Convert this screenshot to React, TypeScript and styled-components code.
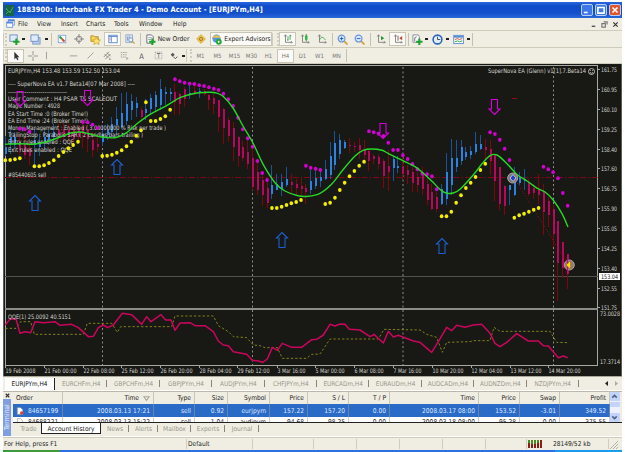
import React from 'react'
import styled, { createGlobalStyle } from 'styled-components'

const GlobalStyle = createGlobalStyle`
  * {
    box-sizing: border-box;
  }
  body {
    margin: 0;
    background: #fff;
    overflow: hidden;
  }
`

const face = '#f0eee3'
const line = '#cfccbc'
const ui = "'DejaVu Sans Condensed', 'DejaVu Sans', sans-serif"

const Screen = styled.div`
  width: 625px;
  height: 452px;
  padding: 2px 3px 0 3px;
  display: flex;
  flex-direction: column;
  background: #fff;
  color: #222;
  font-family: ${ui};
  font-stretch: condensed;
  font-size: 6.6px;
  line-height: 8px;
  white-space: nowrap;
  overflow: hidden;
`

const TitleBar = styled.header`
  display: flex;
  align-items: center;
  flex: 0 0 16px;
  padding: 0 1px 0 2px;
  gap: 2px;
  background: linear-gradient(#2a68dc, #0e4bc8 25%, #1350cc 70%, #2a68d8);
  color: #fff;
`

const Title = styled.span`
  flex: 1;
  margin-left: 1px;
  font-family: 'DejaVu Sans', sans-serif;
  font-stretch: condensed;
  font-weight: bold;
  font-size: 7.4px;
  letter-spacing: 0.08px;
`

const WindowButton = styled.div<{ $close?: boolean }>`
  width: 12px;
  height: 12px;
  border: 1px solid #b8cff5;
  border-radius: 2px;
  background: ${(p) => (p.$close ? '#e2542c' : '#3d78e4')};
  svg {
    display: block;
  }
`

const MenuBar = styled.nav`
  display: flex;
  align-items: center;
  flex: 0 0 13px;
  padding: 0 3px;
  background: ${face};
  border-bottom: 1px solid ${line};
`

const MenuItem = styled.span<{ $w: number }>`
  width: ${(p) => p.$w}px;
`

const MdiButtons = styled.div`
  display: flex;
  margin-left: auto;
  gap: 4px;
`

const ToolBar = styled.div<{ $h: number }>`
  display: flex;
  align-items: center;
  flex: 0 0 ${(p) => p.$h}px;
  background: ${face};
  border-bottom: 1px solid ${line};
`

const Grip = styled.div<{ $w: number }>`
  flex: 0 0 ${(p) => p.$w}px;
  height: 13px;
  border-left: 1px solid ${line};
  border-right: 2px dotted #d0cdbd;
`

const Divider = styled.div<{ $w: number }>`
  flex: 0 0 ${(p) => p.$w}px;
  height: 13px;
  background: linear-gradient(#c4c1b2, #c4c1b2) center / 1px 100% no-repeat;
`

const Tool = styled.div<{ $w?: number; $on?: boolean }>`
  display: flex;
  align-items: center;
  justify-content: center;
  gap: 2px;
  flex: 0 0 ${(p) => p.$w || 17}px;
  height: 14px;
  font-size: ${(p) => (p.$w && p.$w > 20 ? 6.6 : 6)}px;
  border: 1px solid ${(p) => (p.$on ? '#c9c6b8' : 'transparent')};
  background: ${(p) => (p.$on ? '#fbfaf6' : 'transparent')};
  svg {
    flex: none;
  }
`

const Period = styled(Tool)`
  color: #777;
`

const Caret = styled.div`
  flex: 0 0 5px;
  height: 2px;
  background: linear-gradient(#222, #222) center / 3px 2px no-repeat;
`

const ChartWindow = styled.main`
  flex: 0 0 312px;
  height: 312px;
  background: #181814;
  svg {
    display: block;
  }
`

const ChartTabs = styled.div`
  display: flex;
  align-items: center;
  flex: 0 0 14px;
  padding-left: 2px;
  background: ${face};
  color: #99968a;
  border-top: 1px solid #aaa79b;
`

const ChartTab = styled.span<{ $active?: boolean }>`
  flex: 0 0 ${(p) => (p.$active ? 50 : 52.4)}px;
  height: 12px;
  line-height: 12px;
  text-align: center;
  font-size: 6.4px;
  color: ${(p) => (p.$active ? '#111' : 'inherit')};
  background: ${(p) =>
    p.$active
      ? '#fff'
      : 'linear-gradient(#888578, #888578) right center / 1px 7px no-repeat'};
  border-right: ${(p) => (p.$active ? '1px solid #222' : '0')};
`

const TabArrows = styled.div`
  display: flex;
  gap: 7px;
  margin-left: auto;
  padding-right: 3px;
`

const Terminal = styled.section`
  display: flex;
  flex: 0 0 45px;
  margin-top: 1px;
  background: ${face};
  border-top: 1px solid #bbb8aa;
`

const Side = styled.div`
  flex: 0 0 8px;
  display: flex;
  flex-direction: column;
  align-items: center;
`

const SideTitle = styled.div`
  flex: 1;
  width: 8px;
  writing-mode: vertical-rl;
  transform: rotate(180deg);
  line-height: 8px;
  text-align: center;
  font-size: 6.8px;
  background: #7f9fe0;
  color: #e6eeff;
`

const TerminalBody = styled.div`
  flex: 1;
  min-width: 0;
  padding-left: 2px;
`

const TableArea = styled.div`
  display: flex;
  height: 31px;
  overflow: hidden;
  border-bottom: 1px solid #222;
`

const Table = styled.div`
  flex: 0 0 597px;
`

const Row = styled.div<{ $kind: 'head' | 'selected' | 'plain' }>`
  display: flex;
  height: ${(p) => (p.$kind === 'selected' ? 13 : 12)}px;
  line-height: ${(p) => (p.$kind === 'plain' ? 10 : 12)}px;
  align-items: ${(p) => (p.$kind === 'plain' ? 'flex-start' : 'stretch')};
  background: ${(p) =>
    p.$kind === 'head' ? face : p.$kind === 'selected' ? '#2b6bc8' : '#fff'};
  color: ${(p) => (p.$kind === 'selected' ? '#dce8ff' : '#222')};
`

const Cell = styled.span<{ $w: number; $left?: boolean }>`
  flex: 0 0 ${(p) => p.$w}px;
  display: flex;
  align-items: center;
  gap: 4px;
  justify-content: ${(p) => (p.$left ? 'flex-start' : 'flex-end')};
  padding: 0 3px;
  border-right: 1px solid rgba(160, 160, 140, 0.5);
`

const Scroll = styled.div`
  flex: 0 0 10px;
  display: flex;
  flex-direction: column;
  justify-content: space-between;
  background: #eef1fb;
`

const ScrollButton = styled.div`
  height: 9px;
  background: #c4d3fa;
  border-radius: 1px;
`

const Thumb = styled(ScrollButton)`
  height: 5px;
  margin-bottom: 5px;
`

const TerminalTabs = styled.div`
  display: flex;
  height: 12px;
  padding-left: 3px;
  line-height: 12px;
  color: #99968a;
`

const TerminalTab = styled.span<{ $w: number; $active?: boolean; $bar?: boolean }>`
  flex: 0 0 ${(p) => p.$w}px;
  text-align: center;
  height: 11px;
  color: ${(p) => (p.$active ? '#111' : 'inherit')};
  background: ${(p) =>
    p.$active
      ? '#fff'
      : p.$bar
        ? 'linear-gradient(#888578, #888578) right center / 1px 7px no-repeat'
        : 'none'};
  border: ${(p) => (p.$active ? '1px solid #222' : '0')};
  border-top: 0;
`

const StatusBar = styled.footer`
  display: flex;
  align-items: center;
  flex: 0 0 13px;
  margin-top: 1px;
  background: ${face};
  border-top: 1px solid ${line};
`

const StatusCell = styled.span<{ $w: number }>`
  display: flex;
  align-items: center;
  gap: 11px;
  flex: 0 0 ${(p) => p.$w}px;
  height: 10px;
  padding-left: 1px;
  border-right: 1px solid ${line};
`

const TaskBar = styled.div`
  flex: 0 0 2px;
  background: linear-gradient(
    90deg,
    #3f9a38 57px,
    #2c6fe4 57px,
    #2c6fe4 552px,
    #1c9ced 552px
  );
`

type IconName =
  | 'newChart' | 'profiles' | 'market' | 'target' | 'folder' | 'navigator'
  | 'tester' | 'order' | 'warn' | 'expert' | 'bars' | 'candles' | 'lineChart'
  | 'zoomIn' | 'zoomOut' | 'scroll' | 'shift' | 'indicator' | 'clock'
  | 'template' | 'cursor' | 'cross' | 'vline' | 'hline' | 'trend' | 'channel'
  | 'fibo' | 'text' | 'label' | 'arrows' | 'mdi' | 'doc'

const axes = <path d="M3 1v9h8M1.500 3L3 1l1.500 2M9.500 8.500L11 10l-1.500 1.500" stroke="#777" fill="none" />
const plus = <path d="M8 5v7M4.500 8.500h7" stroke="#1aa32a" strokeWidth="2.200" />
const lens = (
  <>
    <path d="M7.500 7.500l4 4" stroke="#d5a33a" strokeWidth="2" />
    <circle cx="5" cy="5" r="3.700" fill="#d8e9ff" stroke="#6b93d8" strokeWidth="1.300" />
  </>
)

const glyphs: Record<IconName, React.ReactNode> = {
  newChart: <><rect x="1" y="1" width="8" height="7" fill="#dfeafc" stroke="#6d8fc5" />{plus}</>,
  profiles: <><rect x="3" y="4" width="8" height="7" fill="#bcd0f0" stroke="#7c98c8" /><rect x="1" y="1" width="8" height="7" fill="#dfeafc" stroke="#6d8fc5" /></>,
  market: <><rect x="1.500" y="1.500" width="9" height="9" fill="#fff" stroke="#7ba0d8" /><path d="M3 3l3 3" stroke="#2a9c3a" strokeWidth="2.400" /><path d="M6 6l3 3" stroke="#e0452e" strokeWidth="2.400" /></>,
  target: <><circle cx="6" cy="6" r="3.400" fill="none" stroke="#777" /><path d="M6 0v5M6 7v5M0 6h5M7 6h5" stroke="#777" /></>,
  folder: <><path d="M1 2h3l1 1h4v5H1z" fill="#f8d65a" stroke="#b58a22" /><path d="M7 4l1.500 2.300 3 .3-2.200 2 .6 2.900L7 10l-2.800 1.500.6-2.900-2.200-2 3-.3z" fill="#ffe36c" stroke="#c69620" strokeWidth=".7" /></>,
  navigator: <><rect x="1" y="1.500" width="10" height="9" fill="#fff" stroke="#4b7fd0" /><path d="M1 3h10M4 3v7" stroke="#4b7fd0" /><path d="M2 5h1M2 7h1" stroke="#d33" /></>,
  tester: <><rect x="1" y="1" width="8" height="9" fill="#dce6f7" stroke="#8aa4d0" /><path d="M3 3v5M5 2v4" stroke="#8a93a8" /><path d="M8.500 8.500l3 3" stroke="#d5a33a" strokeWidth="1.500" /><circle cx="7" cy="7" r="2.500" fill="#eaf3ff" stroke="#6b87b8" /></>,
  order: <><path d="M2 1h5l2 2v7H2z" fill="#fff" stroke="#667" /><path d="M3.500 4h4M3.500 6h3" stroke="#99a" />{plus}</>,
  warn: <><path d="M6 .8L11.200 6 6 11.200.8 6z" fill="#f8cf52" stroke="#d49a1c" /><circle cx="6" cy="6" r="2" fill="#fff2b8" stroke="#a87616" /><path d="M6 3v6M3 6h6" stroke="#a87616" strokeWidth=".7" /></>,
  expert: <><circle cx="6" cy="5" r="4.500" fill="#5b95dd" /><path d="M1 4c3-4 8-3 10 0z" fill="#e8c14e" /><circle cx="8.500" cy="8.500" r="3.200" fill="#25a83b" /><path d="M7.500 7v3l2.500-1.500z" fill="#fff" /></>,
  bars: <>{axes}<path d="M6 3v5M8.500 1v6M5 7h1M8.500 2H10" stroke="#22a03a" /></>,
  candles: <>{axes}<path d="M7.500 0v9" stroke="#13802a" /><rect x="6" y="2" width="3" height="5" fill="#29b845" /></>,
  lineChart: <>{axes}<path d="M3 7c2-4 4-4 7 0" stroke="#22a03a" fill="none" /></>,
  zoomIn: <>{lens}<path d="M3 5h4M5 3v4" stroke="#2458b5" /></>,
  zoomOut: <>{lens}<path d="M3 5h4" stroke="#2458b5" /></>,
  scroll: <>{axes}<path d="M6 2.500v5L10 5z" fill="#1d9b34" /></>,
  shift: <>{axes}<path d="M6 2v6" stroke="#555" /><path d="M11 2.500v5L7.500 5z" fill="#cf4030" /></>,
  indicator: <><path d="M1 1h6l1 2v6H1z" fill="#fff" stroke="#889" /><path d="M3 8V4l2-1" stroke="#667" fill="none" />{plus}</>,
  clock: <><circle cx="6" cy="6" r="4.800" fill="#e2eefc" stroke="#2a66c4" strokeWidth="1.700" /><path d="M6 3v3h3" stroke="#444" fill="none" /></>,
  template: <><rect x=".8" y="1.500" width="10.500" height="9" fill="#fff" stroke="#5c8cd2" /><path d="M1 3h10" stroke="#5c8cd2" strokeWidth="2" /><path d="M2 6l3-1 2 1 3-1" stroke="#c43" fill="none" /><path d="M2 8.500l3-1 2 1 3-1" stroke="#2a3" fill="none" /></>,
  cursor: <path d="M4 1v9l2-2 1.500 3 1.500-1-1.500-2.500H10z" fill="#333" />,
  cross: <path d="M6 0v5M6 7v5M0 6h5M7 6h5" stroke="#888" />,
  vline: <path d="M6 1v10" stroke="#888" />,
  hline: <path d="M1 6.500h10" stroke="#888" />,
  trend: <path d="M2 10l8-8" stroke="#888" />,
  channel: <path d="M1 8l7-7M3 11l7-7M2 4l5 5M5 2l5 5M9 9v3h2" stroke="#777" fill="none" />,
  fibo: <path d="M1 2h9M1 5h9M1 8h7M9 8v4M9 10h2" stroke="#888" strokeDasharray="2 1" />,
  text: <text x="6" y="10" textAnchor="middle" fontSize="10" fill="#555">A</text>,
  label: <><rect x="1.500" y="1.500" width="9" height="9" fill="none" stroke="#999" strokeDasharray="1.500 1" /><text x="6" y="9.500" textAnchor="middle" fontSize="9" fill="#666">T</text></>,
  arrows: <><path d="M1 4l3-3 3 3-3 3z" fill="#555" /><path d="M5 7l3 3 3-3" stroke="#555" strokeWidth="1.500" fill="none" /></>,
  mdi: <><rect x="3" y="1" width="8" height="7" fill="#fff" stroke="#5584d8" /><path d="M3 2h8" stroke="#5584d8" strokeWidth="2" /><rect x="1" y="4" width="8" height="7" fill="#fff" stroke="#5584d8" /><path d="M1 5h8" stroke="#5584d8" strokeWidth="2" /></>,
  doc: <><path d="M2 1h5l3 3v7H2z" fill="#fff" stroke="#999" /><circle cx="8.500" cy="9" r="2.500" fill="#e2452e" /></>,
}

const Icon: React.FC<{ name: IconName; size?: number }> = ({ name, size = 10 }) => (
  <svg width={size} height={size} viewBox="0 0 12 12">
    {glyphs[name]}
  </svg>
)

// [high, low, body top, body bottom], thirds of a pixel below y=62
type Candle = [string, number, number, number, number]
const candles: Candle[] = [
  ['b', 222, 282, 255, 275], ['b', 200, 275, 225, 245], ['b', 210, 260, 225, 250],
  ['r', 215, 280, 240, 265], ['r', 225, 290, 245, 278], ['r', 250, 310, 258, 282],
  ['b', 200, 305, 235, 250], ['b', 215, 283, 240, 255], ['b', 205, 265, 225, 240],
  ['b', 205, 250, 215, 235], ['b', 185, 240, 210, 225], ['r', 185, 235, 205, 220],
  ['r', 180, 240, 200, 225], ['r', 185, 240, 205, 225], ['r', 190, 245, 205, 230],
  ['r', 190, 240, 205, 225], ['r', 180, 258, 195, 215], ['r', 190, 270, 200, 230],
  ['r', 210, 285, 235, 265], ['r', 220, 270, 245, 255], ['b', 190, 250, 215, 240],
  ['b', 185, 235, 205, 220], ['b', 165, 225, 185, 210], ['b', 135, 220, 170, 190],
  ['b', 92, 200, 152, 195], ['b', 90, 190, 125, 177], ['b', 95, 175, 118, 145],
  ['b', 105, 165, 122, 137], ['r', 135, 180, 145, 165], ['b', 110, 175, 140, 152],
  ['b', 95, 155, 107, 140], ['b', 88, 150, 100, 135], ['b', 50, 145, 80, 130],
  ['b', 75, 130, 90, 97], ['b', 78, 118, 90, 96], ['r', 65, 160, 90, 120],
  ['r', 90, 160, 95, 125], ['r', 75, 135, 80, 110], ['b', 70, 110, 92, 97],
  ['r', 70, 100, 88, 94], ['b', 78, 108, 88, 94], ['r', 80, 102, 88, 96],
  ['r', 95, 143, 100, 113], ['r', 100, 155, 107, 125], ['r', 113, 210, 115, 165],
  ['r', 138, 245, 141, 197], ['r', 165, 240, 175, 222], ['r', 180, 298, 198, 255],
  ['r', 222, 315, 226, 283], ['r', 237, 297, 254, 288], ['r', 225, 320, 270, 305],
  ['r', 245, 385, 288, 375], ['r', 290, 398, 330, 385], ['r', 340, 432, 355, 400],
  ['r', 350, 437, 378, 422], ['b', 310, 410, 370, 397], ['b', 335, 385, 365, 383],
  ['b', 335, 402, 360, 380], ['b', 315, 375, 350, 368], ['r', 335, 395, 360, 370],
  ['r', 350, 400, 365, 378], ['r', 347, 405, 372, 380], ['r', 365, 425, 377, 390],
  ['b', 320, 395, 358, 383], ['b', 325, 380, 348, 373], ['b', 325, 375, 345, 358],
  ['b', 295, 355, 320, 352], ['b', 240, 352, 283, 338], ['b', 208, 325, 243, 308],
  ['b', 215, 290, 233, 275], ['b', 233, 262, 240, 258], ['r', 228, 272, 248, 251],
  ['r', 240, 270, 252, 256], ['r', 228, 290, 250, 265], ['r', 235, 300, 265, 280],
  ['r', 260, 328, 267, 297], ['r', 275, 305, 282, 292], ['r', 275, 320, 285, 305],
  ['r', 290, 378, 297, 342], ['r', 265, 387, 313, 330], ['b', 280, 356, 290, 318],
  ['b', 283, 333, 313, 319], ['r', 280, 350, 315, 337], ['r', 310, 365, 325, 338],
  ['r', 315, 390, 330, 362], ['r', 330, 390, 345, 368], ['r', 315, 400, 340, 380],
  ['r', 345, 430, 365, 415], ['r', 365, 445, 390, 440], ['r', 390, 450, 405, 440],
  ['b', 365, 430, 380, 425], ['b', 272, 430, 330, 410], ['b', 230, 400, 288, 370],
  ['b', 235, 330, 288, 315], ['b', 235, 310, 255, 297], ['b', 255, 293, 270, 285],
  ['b', 252, 290, 268, 280], ['b', 210, 275, 247, 270], ['b', 218, 265, 247, 262],
  ['r', 230, 290, 255, 265], ['r', 235, 340, 260, 298], ['r', 275, 418, 280, 357],
  ['r', 315, 445, 315, 425], ['r', 370, 458, 372, 432], ['b', 368, 430, 368, 383],
  ['b', 315, 402, 350, 398], ['b', 330, 370, 345, 362], ['b', 320, 385, 350, 358],
  ['r', 350, 402, 360, 395], ['r', 365, 410, 378, 392], ['r', 335, 425, 385, 400],
  ['r', 365, 518, 388, 450], ['r', 405, 495, 418, 460], ['r', 430, 555, 440, 515],
  ['r', 477, 716, 477, 602], ['r', 540, 647, 540, 617], ['r', 577, 682, 577, 637],
]

// [first candle, levels]
const sarUp: [number, number[]][] = [
  [0, [295, 294, 292, 289]],
  [6, [313, 313, 310, 303, 295, 282, 270, 259, 249, 239]],
  [20, [282, 281, 278, 272, 265, 253, 239, 221, 205, 121, 177, 177, 171, 163, 143]],
  [55, [438, 438, 434, 429, 424, 420, 414]],
  [66, [426, 422, 407, 384, 362, 343, 327, 311, 299]],
  [90, [463, 463, 449, 422, 400, 378, 362, 345, 324, 305]],
  [105, [467, 460, 455, 449, 443, 438]],
]
const sarDown: [number, number[]][] = [
  [3, [200, 202, 209]],
  [16, [180, 181, 188, 198]],
  [35, [52, 58, 62, 65, 66, 70, 72, 76, 80, 84, 95, 112, 132, 167, 202, 229, 254, 297, 333, 354]],
  [62, [311, 317, 320, 324]],
  [75, [208, 211, 215, 222, 242, 264, 264, 280, 291, 306, 322, 335, 337, 343, 382]],
  [100, [211, 216, 233, 260, 294]],
  [111, [314, 322, 331, 349, 393, 431]],
]

const average: [number, number][] = [
  [5, 144.3], [20, 143.7], [33, 144.3], [45, 142.3], [60, 137], [72, 132.8], [80, 132],
  [88, 133.5], [100, 136.7], [115, 137.7], [125, 133.7], [137, 123.7], [150, 114.3],
  [167, 105.3], [180, 97.7], [193, 93.7], [208, 92.3], [215, 92.7], [223, 96.3],
  [233, 108], [243, 126], [253, 143], [263.3, 164.7], [275, 182.7], [285, 191],
  [298, 195.7], [308, 196.3], [320, 193.3], [332, 183.7], [343, 169.7], [355, 156],
  [363, 150.3], [372, 149], [382, 150.3], [388, 153.3], [402, 160.2], [415, 166.7],
  [423, 173], [432, 181.3], [441, 190.3], [447, 193.2], [453, 193], [460, 189.3],
  [473, 175.3], [482, 163.7], [490, 155.7], [497, 155], [507, 163.7], [517, 174.5],
  [527, 181], [538, 188.7], [545, 192], [553, 199.7], [562, 213.7], [568, 227],
]

const smooth = (pts: [number, number][]) =>
  pts.slice(1).reduce((d, p, i) => {
    const a = pts[i]
    const before = pts[i - 1] || a
    const after = pts[i + 2] || p
    const c1 = [a[0] + (p[0] - before[0]) / 6, a[1] + (p[1] - before[1]) / 6]
    const c2 = [p[0] - (after[0] - a[0]) / 6, p[1] - (after[1] - a[1]) / 6]
    return `${d}C${c1} ${c2} ${p}`
  }, `M${pts[0]}`)

const qqeFast =
  '16,60 30,42 48,42 60,85 75,80 92,83 105,50 130,53 165,50 180,61 215,58 235,68 265,95 280,94 295,68 310,60 323,68 340,60 367,25 395,29 425,58 440,35 453,50 483,29 497,45 513,45 525,76 540,54 570,53 585,62 615,62 640,80 655,108 670,120 685,122 700,140 740,148 757,166 775,168 788,172 802,162 817,127 832,136 847,115 875,127 905,127 935,104 950,103 970,90 990,58 1005,63 1020,57 1035,58 1048,73 1080,75 1110,95 1122,88 1150,114 1165,79 1180,96 1195,91 1240,108 1260,112 1295,142 1315,110 1340,67 1355,77 1370,61 1395,67 1420,60 1445,58 1470,85 1485,115 1500,125 1520,112 1550,86 1585,108 1615,108 1630,122 1645,123 1675,158 1690,153 1703,158'
const qqeSlow =
  '16,70 48,70 62,50 92,50 103,88 250,88 262,55 335,55 352,82 362,65 515,65 525,33 640,33 655,62 672,72 685,80 700,95 740,98 760,120 780,122 795,128 832,128 847,160 920,160 935,148 960,147 975,125 990,102 1135,102 1152,73 1260,75 1280,88 1310,97 1327,142 1340,112 1410,110 1420,107 1470,107 1482,67 1500,79 1650,79 1670,112 1703,113'

// [text, baseline, width]
const comments: [string, number, number][] = [
  ['EURJPYm,H4  153.48 153.59 152.50 153.04', 73.4, 112],
  ['---- SuperNova EA v1.7 Beta14[07 Mar 2008] ----', 86.4, 127],
  ['-----------------------------', 93.5, 59],
  ['User Comment : H4 PSAR TS SCALEOUT', 101, 109],
  ['Magic Number : 4928', 108.2, 52],
  ['EA Start Time :0 (Broker Time!)', 115.5, 80],
  ['EA End Time :24 (Broker Time!)', 122.7, 80],
  ['Money Management : Enabled ( 3.00000000 % Risk per trade )', 130, 158],
  ['TrailingStop : Parabolic SAR ( 2 candles bars trailing )', 137.2, 135],
  ['Entry rules enabled : QQE', 144.4, 66],
  ['Exit rules enabled :  QQE', 151.6, 64],
  ['#85440605 sell', 177, 38],
]

const prices: [string, number][] = [
  ['161.75', 69.5], ['160.95', 89.5], ['160.10', 109.5], ['159.25', 129.5],
  ['158.40', 149.5], ['157.60', 168.5], ['156.75', 188.5], ['155.90', 208.5],
  ['155.05', 228.5], ['154.25', 248.5], ['153.40', 268.5], ['152.55', 288.5], ['151.75', 307.5],
]

const times: [string, number, number][] = [
  ['19 Feb 2008', 5, 31], ['21 Feb 00:00', 44, 33], ['22 Feb 08:00', 83, 32],
  ['25 Feb 12:00', 121, 33], ['26 Feb 20:00', 160, 33], ['28 Feb 04:00', 199, 33],
  ['29 Feb 12:00', 237, 33], ['3 Mar 16:00', 277, 29], ['5 Mar 00:00', 315, 30],
  ['6 Mar 08:00', 354, 30], ['7 Mar 16:00', 393, 29], ['10 Mar 20:00', 432, 32],
  ['12 Mar 04:00', 471, 32], ['13 Mar 12:00', 510, 32], ['14 Mar 20:00', 548, 33],
]

const candleX = (i: number) => 5.3 + i * 4.848
const level = (v: number) => 62 + v / 3

const Dots: React.FC<{ runs: [number, number[]][]; color: string }> = ({ runs, color }) => (
  <g fill={color}>
    {runs.map(([start, values]) =>
      values.map((v, n) => (
        <ellipse key={start + n} cx={candleX(start + n)} cy={level(v)} rx="1.800" ry="2" />
      ))
    )}
  </g>
)

const Signal: React.FC<{ x: number; y: number; up?: boolean }> = ({ x, y, up }) => (
  <path
    transform={`translate(${x} ${y})${up ? '' : ' scale(1 -1)'}`}
    d="M0-7.500L5.500-2H3V7.500H-3V-2H-5.500Z"
    fill="none"
    stroke={up ? '#1e5fd0' : '#d800d8'}
    strokeWidth="1.100"
  />
)

const Chart: React.FC = () => (
  <svg width="619" height="312" viewBox="3 64 619 312" fontFamily={ui} fontSize="6.200">
    <rect x="3" y="64" width="619" height="312" fill="#181814" />
    <path d="M3.500 64v312M621.500 64v312" stroke="#5c5c56" />
    <path d="M5.500 66v300M5 65.500h593M597.500 66v300M5 365.500h593" stroke="#a8a8a2" />
    <path d="M5 309h593" stroke="#8c8c88" strokeWidth="2" />
    <g stroke="#8e8e88" strokeDasharray="2 2.500">
      {[102.5, 252.5, 403, 553.5].map((x) => (
        <path key={x} d={`M${x} 67V365`} />
      ))}
    </g>
    <path d="M5 276.500h593" stroke="#51514d" />
    <path d="M5 177.500h593" stroke="#7b0814" strokeDasharray="6 2 1.500 2" />
    <path d="M512 98.500h5" stroke="#8e0c14" />
    <g shapeRendering="crispEdges">
      {candles.map(([kind, high, low, top, bottom], i) => {
        const x = Math.floor(candleX(i))
        return (
          <g key={i}>
            <path
              d={`M${x + 0.5} ${level(high)}V${level(low)}`}
              stroke={kind === 'b' ? '#17549c' : '#80050d'}
            />
            <rect
              x={x}
              y={level(top)}
              width="2"
              height={(bottom - top) / 3}
              fill={kind === 'b' ? '#2c82e0' : '#b8075c'}
            />
          </g>
        )
      })}
    </g>
    {comments.map(([text, y, w]) => (
      <text key={text} x="8" y={y} textLength={w} lengthAdjust="spacingAndGlyphs" fill="#d6d6d2">
        {text}
      </text>
    ))}
    <path d="M514 178L568 264" stroke="#a00c16" strokeDasharray="1 2" />
    <Dots runs={sarUp} color="#f5f000" />
    <Dots runs={sarDown} color="#d400d4" />
    <path d={smooth(average)} fill="none" stroke="#27d827" strokeWidth="1.400" />
    <Signal x={20} y={99} />
    <Signal x={87.5} y={98} />
    <Signal x={383} y={131} />
    <Signal x={494.5} y={107} />
    <Signal x={35} y={203} up />
    <Signal x={117} y={167} up />
    <Signal x={282} y={240} up />
    <Signal x={442} y={246} up />
    <circle cx="512.700" cy="178" r="5" fill="#777" stroke="#aaa" />
    <path d="M513 174.500l3 3.500-3 3.500-3-3.500z" fill="#2440c8" stroke="#ddd" strokeWidth=".8" />
    <circle cx="569.300" cy="265" r="5" fill="#8d7d78" stroke="#a9a09c" />
    <path d="M567.500 257v17" stroke="#c8086a" strokeWidth="1.200" />
    <path d="M570.500 261v8l-4.500-4z" fill="#ffe100" stroke="#c04a20" strokeWidth=".5" />
    <g transform="translate(0 305) scale(.33333)" fill="none" strokeLinejoin="round">
      <polyline points={qqeSlow} stroke="#8e8e1c" strokeWidth="2.700" strokeDasharray="7 6" />
      <polyline points={qqeFast} stroke="#c8065c" strokeWidth="4.600" />
    </g>
    <g fill="#d6d6d2">
      <text x="488" y="73.400" textLength="98" lengthAdjust="spacingAndGlyphs">
        SuperNova EA (Glenn) v1[1].7.Beta14
      </text>
      <text x="8" y="318.500" textLength="63" lengthAdjust="spacingAndGlyphs">
        QQE(1) 25.0092 40.5151
      </text>
      {prices.map(([p, y]) => (
        <g key={p}>
          <path d={`M598 ${y}h2`} stroke="#a8a8a2" />
          <text x="601" y={y + 2.2} textLength="16" lengthAdjust="spacingAndGlyphs">{p}</text>
        </g>
      ))}
      <text x="600" y="316.400" textLength="20" lengthAdjust="spacingAndGlyphs">73.0028</text>
      <text x="600" y="363.800" textLength="20" lengthAdjust="spacingAndGlyphs">17.3714</text>
      {times.map(([t, x, w]) => (
        <g key={t}>
          <path d={`M${x + 0.5} 366v2`} stroke="#a8a8a2" />
          <text x={x + 0.5} y="373.400" textLength={w - 1} lengthAdjust="spacingAndGlyphs">{t}</text>
        </g>
      ))}
    </g>
    <circle cx="591.500" cy="71.500" r="3" fill="none" stroke="#ccc" strokeWidth=".9" />
    <path d="M590 72.500q1.500 1.500 3 0M590.200 70.500h.8M592.200 70.500h.8" fill="none" stroke="#ccc" strokeWidth=".8" />
    <rect x="599" y="273" width="21" height="7" fill="#fff" />
    <text x="601" y="278.800" textLength="17" lengthAdjust="spacingAndGlyphs" fill="#111">153.04</text>
  </svg>
)

const menu: [string, number][] = [
  ['File', 19], ['View', 24], ['Insert', 25], ['Charts', 28],
  ['Tools', 25], ['Window', 34], ['Help', 20],
]

const pairs = [
  'EURJPYm', 'EURCHFm', 'GBPCHFm', 'GBPJPYm', 'AUDJPYm', 'CHFJPYm',
  'EURCADm', 'EURAUDm', 'AUDCADm', 'AUDNZDm', 'NZDJPYm',
]

const columns = [50, 91, 41, 33, 42, 38, 41, 41, 89, 41, 40, 50]
const heads = ['Order', 'Time', 'Type', 'Size', 'Symbol', 'Price', 'S / L', 'T / P', 'Time', 'Price', 'Swap', 'Profit']
const orders = [
  ['84657199', '2008.03.13 17:21', 'sell', '0.92', 'eurjpym', '157.22', '157.20', '0.00', '2008.03.17 08:00', '153.52', '-3.01', '349.52'],
  ['84688221', '2008.03.13 15:22', 'sell', '1.04', 'audjpym', '94.68', '98.25', '0.00', '2008.03.18 08:00', '95.28', '0.00', '375.55'],
]

const Small: React.FC<{ d: string; color?: string; size?: number }> = ({ d, color = '#333', size = 8 }) => (
  <svg width={size} height={size} viewBox="0 0 8 8">
    <path d={d} fill="none" stroke={color} strokeWidth="1.300" />
  </svg>
)

const App: React.FC = () => (
  <>
    <GlobalStyle />
    <Screen>
      <TitleBar>
        <svg width="9" height="11" viewBox="0 0 9 11">
          <rect width="9" height="11" fill="#176548" />
          <path d="M1 9l3-3 1 2 3-6M1 3l2 3" stroke="#48ac52" fill="none" />
        </svg>
        <Title>1883900: Interbank FX Trader 4 - Demo Account - [EURJPYm,H4]</Title>
        <WindowButton><Small size={10} color="#fff" d="M1.500 6h3" /></WindowButton>
        <WindowButton><Small size={10} color="#fff" d="M1.500 2h5v4.500h-5z" /></WindowButton>
        <WindowButton $close><Small size={10} color="#fff" d="M2 2l4 4M6 2L2 6" /></WindowButton>
      </TitleBar>
      <MenuBar>
        <MenuItem $w={12}><Icon name="mdi" size={9} /></MenuItem>
        {menu.map(([name, w]) => (
          <MenuItem key={name} $w={w}>{name}</MenuItem>
        ))}
        <MdiButtons>
          <Small size={7} d="M2 6h4" />
          <Small size={7} d="M3 1h4v3M1 3h4v4H1z" color="#777" />
          <Small size={7} d="M1.500 1.500l5 5M6.500 1.500l-5 5" />
        </MdiButtons>
      </MenuBar>
      <ToolBar $h={17}>
        <Grip $w={4} />
        <Tool $w={14}><Icon name="newChart" size={11} /></Tool>
        <Caret />
        <Tool $w={18}><Icon name="profiles" size={11} /></Tool>
        <Caret />
        <Divider $w={4} />
        <Tool><Icon name="market" /></Tool>
        <Tool><Icon name="target" /></Tool>
        <Tool><Icon name="folder" size={11} /></Tool>
        <Tool $on><Icon name="navigator" /></Tool>
        <Tool><Icon name="tester" /></Tool>
        <Divider $w={4} />
        <Tool $w={50}><Icon name="order" size={11} />New Order</Tool>
        <Tool $w={18}><Icon name="warn" /></Tool>
        <Tool $w={62} $on><Icon name="expert" size={11} />Expert Advisors</Tool>
        <Grip $w={7} />
        <Tool $on><Icon name="bars" /></Tool>
        <Tool><Icon name="candles" /></Tool>
        <Tool><Icon name="lineChart" /></Tool>
        <Divider $w={4} />
        <Tool><Icon name="zoomIn" size={11} /></Tool>
        <Tool><Icon name="zoomOut" size={11} /></Tool>
        <Divider $w={4} />
        <Tool><Icon name="scroll" /></Tool>
        <Tool $on><Icon name="shift" /></Tool>
        <Divider $w={5} />
        <Tool $w={13}><Icon name="indicator" size={11} /></Tool>
        <Caret />
        <Tool $w={16}><Icon name="clock" size={11} /></Tool>
        <Caret />
        <Tool $w={16}><Icon name="template" size={11} /></Tool>
        <Caret />
        <Divider $w={3} />
      </ToolBar>
      <ToolBar $h={16}>
        <Grip $w={4} />
        <Tool $on><Icon name="cursor" /></Tool>
        <Tool><Icon name="cross" /></Tool>
        <Tool $w={7}><Icon name="vline" size={9} /></Tool>
        <Tool $w={13} />
        {(['hline', 'trend', 'channel', 'fibo', 'text', 'label'] as IconName[]).map((n) => (
          <Tool key={n}><Icon name={n} size={9} /></Tool>
        ))}
        <Tool $w={14}><Icon name="arrows" size={8} /></Tool>
        <Caret />
        <Grip $w={6} />
        {['M1', 'M5', 'M15', 'M30', 'H1', 'H4', 'D1', 'W1', 'MN'].map((p) => (
          <Period key={p} $on={p === 'H4'}>{p}</Period>
        ))}
        <Divider $w={3} />
      </ToolBar>
      <ChartWindow>
        <Chart />
      </ChartWindow>
      <ChartTabs>
        {pairs.map((p, i) => (
          <ChartTab key={p} $active={i === 0}>{p},H4</ChartTab>
        ))}
        <TabArrows>
          <svg width="4" height="5"><path d="M4 0v5L1 2.500z" fill="#222" /></svg>
          <svg width="4" height="5"><path d="M0 0v5l3-2.500z" fill="#aaa" /></svg>
        </TabArrows>
      </ChartTabs>
      <Terminal>
        <Side>
          <Small size={7} d="M2 2l4 4M6 2L2 6" />
          <SideTitle>Terminal</SideTitle>
        </Side>
        <TerminalBody>
          <TableArea>
            <Table>
              <Row $kind="head">
                {heads.map((h, i) => (
                  <Cell key={i} $w={columns[i]} $left={i === 0}>
                    {h}
                    {i === 1 && <Small size={7} color="#aaa79a" d="M1 2h6L4 6z" />}
                  </Cell>
                ))}
              </Row>
              {orders.map((order, r) => (
                <Row key={r} $kind={r === 0 ? 'selected' : 'plain'}>
                  {order.map((v, i) => (
                    <Cell key={i} $w={columns[i]} $left={i === 0}>
                      {i === 0 && <Icon name="doc" size={8} />}
                      {v}
                    </Cell>
                  ))}
                </Row>
              ))}
            </Table>
            <Scroll>
              <ScrollButton><Small size={9} color="#4d6185" d="M2 5l2-2 2 2" /></ScrollButton>
              <Thumb />
              <ScrollButton><Small size={9} color="#4d6185" d="M2 3l2 2 2-2" /></ScrollButton>
            </Scroll>
          </TableArea>
          <TerminalTabs>
            <TerminalTab $w={25}>Trade</TerminalTab>
            <TerminalTab $w={60} $active>Account History</TerminalTab>
            <TerminalTab $w={28} $bar>News</TerminalTab>
            <TerminalTab $w={29} $bar>Alerts</TerminalTab>
            <TerminalTab $w={33} $bar>Mailbox</TerminalTab>
            <TerminalTab $w={34} $bar>Experts</TerminalTab>
            <TerminalTab $w={34} $bar>Journal</TerminalTab>
          </TerminalTabs>
        </TerminalBody>
      </Terminal>
      <StatusBar>
        <StatusCell $w={184}>For Help, press F1</StatusCell>
        <StatusCell $w={66}>Default</StatusCell>
        <StatusCell $w={61} />
        <StatusCell $w={43} />
        <StatusCell $w={43} />
        <StatusCell $w={43} />
        <StatusCell $w={43} />
        <StatusCell $w={41} />
        <StatusCell $w={82}>
          <svg width="14" height="8">
            <path d="M1 0v8M4 0v8M7 0v8M10 0v8M13 0v8" stroke="#8a1f14" strokeWidth="2" />
            <path d="M1 0v3M4 0v4M7 0v4M10 0v3" stroke="#4b8a22" strokeWidth="2" />
          </svg>
          28149/52 kb
        </StatusCell>
        <svg width="10" height="9"><path d="M1 9l8-8M4 9l5-5M7 9l2-2" stroke="#b8b5a5" /></svg>
      </StatusBar>
      <TaskBar />
    </Screen>
  </>
)

export default App
